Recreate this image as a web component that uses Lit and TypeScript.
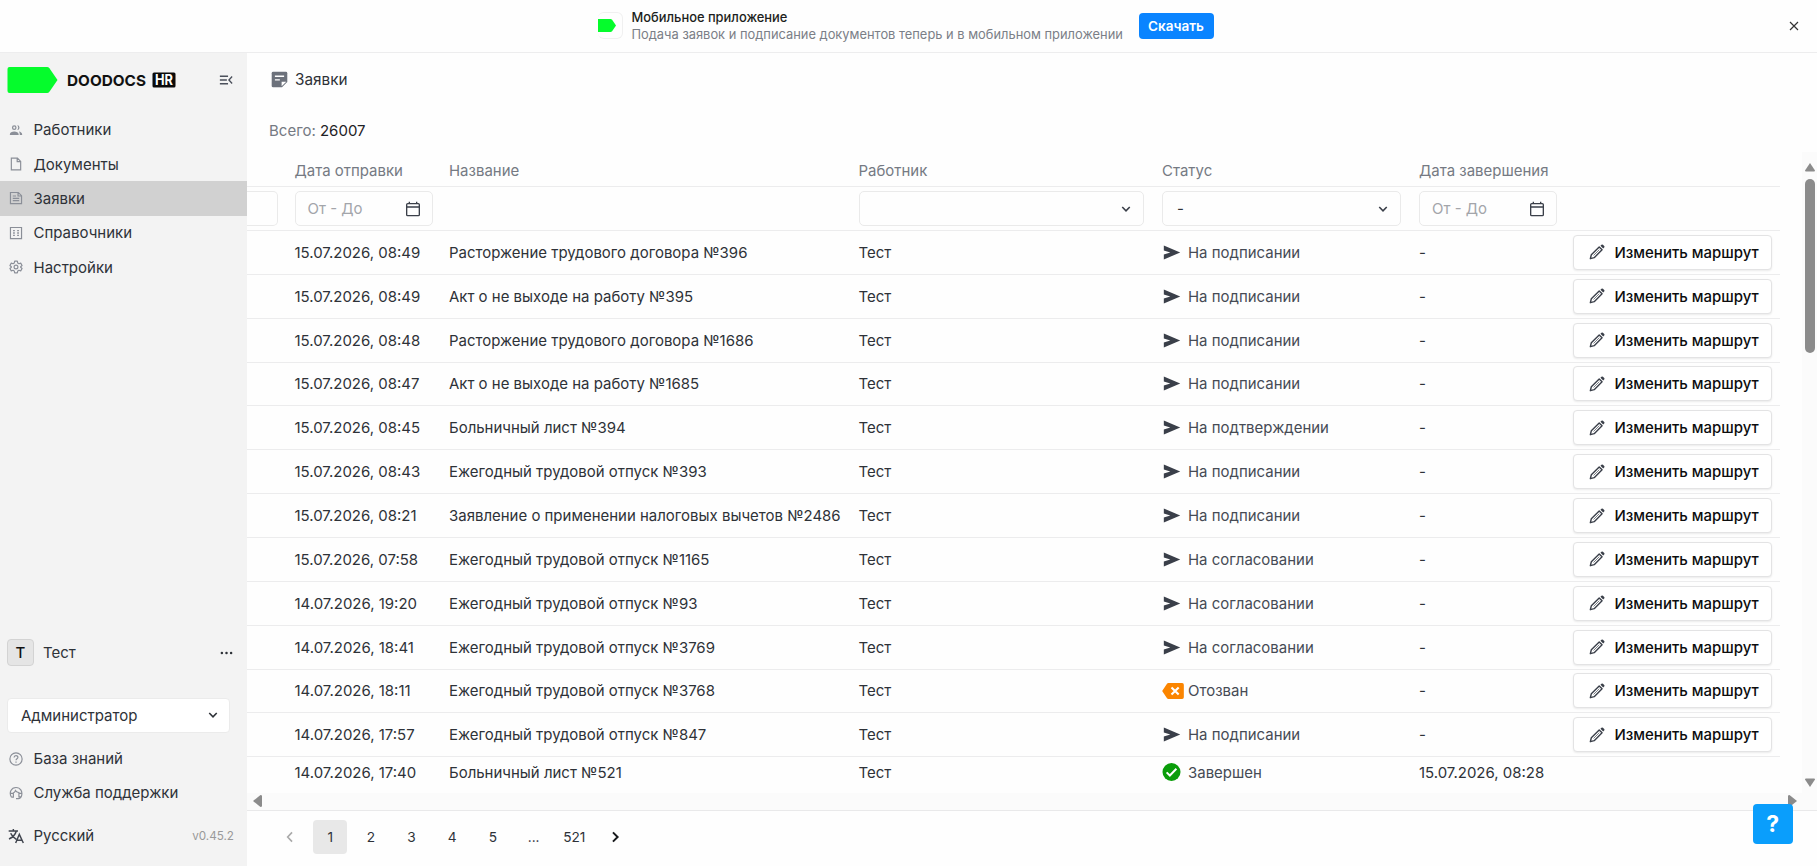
import { LitElement, html, css, svg, nothing } from "lit";
import { customElement } from "lit/decorators.js";

type Status = "sign" | "confirm" | "approve" | "revoked" | "done";
interface Row { date: string; name: string; status: Status; end: string; }

const LABELS: Record<Status, string> = {
  sign: "На подписании",
  confirm: "На подтверждении",
  approve: "На согласовании",
  revoked: "Отозван",
  done: "Завершен",
};

const ROWS: Row[] = [
  ["15.07.2026, 08:49", "Расторжение трудового договора №396", "sign"],
  ["15.07.2026, 08:49", "Акт о не выходе на работу №395", "sign"],
  ["15.07.2026, 08:48", "Расторжение трудового договора №1686", "sign"],
  ["15.07.2026, 08:47", "Акт о не выходе на работу №1685", "sign"],
  ["15.07.2026, 08:45", "Больничный лист №394", "confirm"],
  ["15.07.2026, 08:43", "Ежегодный трудовой отпуск №393", "sign"],
  ["15.07.2026, 08:21", "Заявление о применении налоговых вычетов №2486", "sign"],
  ["15.07.2026, 07:58", "Ежегодный трудовой отпуск №1165", "approve"],
  ["14.07.2026, 19:20", "Ежегодный трудовой отпуск №93", "approve"],
  ["14.07.2026, 18:41", "Ежегодный трудовой отпуск №3769", "approve"],
  ["14.07.2026, 18:11", "Ежегодный трудовой отпуск №3768", "revoked"],
  ["14.07.2026, 17:57", "Ежегодный трудовой отпуск №847", "sign"],
  ["14.07.2026, 17:40", "Больничный лист №521", "done", "15.07.2026, 08:28"],
].map(([date, name, status, end]) => ({ date, name, status: status as Status, end: end ?? "-" }));

const PATHS = {
  people: svg`<g fill="currentColor" stroke="none"><path d="M1.500 20.500v-1.300c0-3.200 3.800-4.700 7.500-4.700s7.500 1.500 7.500 4.700v1.300zM17 14.600c2.800.5 5.500 2 5.500 4.600v1.300h-4v-1.300c0-1.900-.5-3.300-1.500-4.600zM14 4a4 4 0 1 1 0 8 6 6 0 0 0 0-8z"/><path fill-rule="evenodd" d="M9 4a4 4 0 1 1 0 8 4 4 0 0 1 0-8zm0 2.200a1.800 1.800 0 1 0 0 3.600 1.800 1.800 0 0 0 0-3.600z"/></g>`,
  file: svg`<path d="M4 2h10.500l5.500 5.500V22H4zM14 2.300V8h5.700"/>`,
  note: svg`<path d="M2.500 2.500h13.500l5.500 5.500v13.500h-19zM15.500 2.800v5.700h5.700M6.500 8.500h5.500M6.500 12.500h11M6.500 16.500h11"/>`,
  list: svg`<path d="M2.500 2.500h19v19h-19z"/><path d="M7 7.800h3M14 7.800h3M7 12h3M14 12h3M7 16.200h3M14 16.200h3" stroke-width="2.200"/>`,
  gear: svg`<circle cx="12" cy="12" r="3.300"/><path d="M9.700 2h4.600l.7 3.200 2 1.200 3.100-1 2.300 4L20 11.500v1l2.400 2.100-2.300 4-3.100-1-2 1.200-.7 3.200H9.700L9 18.800l-2-1.200-3.100 1-2.300-4L4 12.500v-1L1.600 9.400l2.300-4 3.100 1 2-1.200z" stroke-linejoin="round"/>`,
  help: svg`<circle cx="12" cy="12" r="10.500"/><path d="M8.700 9.500c0-4.500 6.600-4.500 6.600-.3 0 2.300-3.300 2.500-3.300 5M12 16.300v2.200"/>`,
  support: svg`<path d="M4 19c-4.500-8 0-16.500 8-16.500s11.500 7.500 9.500 14.500c-.7 3-2.500 4.500-5.500 4.500h-4M4 19h3.500v-6.500H3M21 12.500h-4v6h4M7 12c2.500-.7 3.500-2 4-4 1.500 2 3.500 3 7 3.500"/>`,
  translate: svg`<path d="M1 4.500h14M8 1.500v3M12.500 4.500c-1.500 5.500-5.500 9.500-11 12M4 8c1.500 4 4.500 6.500 8.500 9M11.500 22.500 17 9.500l6 13M13.500 18.300h7.500" stroke-width="2.200"/>`,
  collapse: svg`<path d="M1.500 5.500h14M1.500 12h12M1.500 18.500h14M22.500 6 17 12l5.500 6" stroke-width="2.300"/>`,
  down: svg`<path d="m4.500 8 7.500 7.500L19.500 8" stroke-width="3.200"/>`,
  left: svg`<path d="M15.500 4 8 12l7.500 8" stroke-width="2.800"/>`,
  right: svg`<path d="M8.500 4 16.500 12l-8 8" stroke-width="3.400"/>`,
  close: svg`<path d="m4 4 16 16M20 4 4 20" stroke-width="2.300"/>`,
  dots: svg`<g fill="currentColor" stroke="none"><circle cx="3.500" cy="12" r="2.300"/><circle cx="12" cy="12" r="2.300"/><circle cx="20.500" cy="12" r="2.300"/></g>`,
  calendar: svg`<path d="M4 4h16a1.500 1.500 0 0 1 1.500 1.500v15A1.500 1.500 0 0 1 20 22H4a1.500 1.500 0 0 1-1.500-1.500v-15A1.500 1.500 0 0 1 4 4zM3 9h18M6.500 1v3M17.500 1v3" stroke-width="2"/>`,
  pencil: svg`<path d="m2 22 1.500-5.800L15.300 4.400l4.300 4.300L7.800 20.500z" stroke-width="2.100" stroke-linejoin="round"/><path d="m6.800 17.200 8.700-8.700" stroke-width="1"/><path d="m17.200 2.700 1.500-1.500a1.600 1.600 0 0 1 2.200 0l1.900 1.900a1.600 1.600 0 0 1 0 2.200l-1.500 1.500z" fill="currentColor" stroke="none"/>`,
  send: svg`<path d="M2.300 3.300 23 12 2.300 20.700v-6.300L10.500 12 2.300 9.600z" fill="currentColor" stroke="none"/>`,
  revoked: svg`<path d="M8.500 2.500H25a2 2 0 0 1 2 2v15a2 2 0 0 1-2 2H8.500a2 2 0 0 1-1.700-.9L1 12l5.800-8.600a2 2 0 0 1 1.700-.9z" fill="#fb8500" stroke="none"/><path d="m12.200 7.700 8.600 8.600M20.800 7.700l-8.600 8.600" stroke="#fff" stroke-width="2.500"/>`,
  done: svg`<circle cx="12" cy="12" r="12" fill="#0a9d0a" stroke="none"/><path d="m5.500 12.500 4.300 4.200 8.700-9" stroke="#fff" stroke-width="2.600"/>`,
  title: svg`<path d="M3 1h18a2 2 0 0 1 2 2v12.500L15.500 23H3a2 2 0 0 1-2-2V3a2 2 0 0 1 2-2z" fill="currentColor" stroke="none"/><path d="M5.500 7.500h13M5.500 12.500h7" stroke="#fff" stroke-width="2"/><path d="M15 21.500V15h6.500z" fill="#fff" stroke="none"/>`,
};
const icon = (name: keyof typeof PATHS, cls = "", box = "0 0 24 24") =>
  html`<svg class="icon ${cls}" viewBox=${box} fill="none" stroke="currentColor" stroke-width="2">${PATHS[name]}</svg>`;

const base = css`
  * { box-sizing: border-box; }
  .icon { width: 14px; height: 14px; flex: none; display: block; }
`;

@customElement("app-banner")
class AppBanner extends LitElement {
  static styles = [base, css`
    :host { display: flex; height: 52.500px; align-items: center; border-bottom: 1px solid #ededee; background: #fefefe; flex: none; padding: 0 17px 0 598px; }
    .app { width: 25px; height: 27px; border: 1px solid #f0f0f0; border-left: 0; border-radius: 6px; display: flex; align-items: center; flex: none; }
    .app svg { width: 18px; height: 13px; display: block; }
    .text { margin-left: 8.500px; width: 507px; white-space: nowrap; }
    .head { font-size: 12.900px; line-height: 17px; color: #1d1e20; font-weight: 500; }
    .sub { font-size: 12.880px; line-height: 17px; color: #7b7f87; }
    .get { height: 26px; width: 75px; border: 0; border-radius: 4px; background: #0a84ff; color: #fff; font: 600 13.500px Inter, sans-serif; padding: 0; }
    .close { margin-left: auto; width: 12px; height: 12px; color: #333; }
  `];
  render() {
    return html`
      <div class="app"><svg viewBox="0 0 18 13"><path d="M0 0h12.500q1 0 1.600.8L18 6.500l-3.900 5.700q-.6.800-1.600.8H0z" fill="#05fc2c"/></svg></div>
      <div class="text"><div class="head">Мобильное приложение</div><div class="sub">Подача заявок и подписание документов теперь и в мобильном приложении</div></div>
      <button class="get">Скачать</button>
      ${icon("close", "close")}`;
  }
}

@customElement("app-sidebar")
class AppSidebar extends LitElement {
  static styles = [base, css`
    :host { display: flex; flex-direction: column; width: 247px; flex: none; background: #f3f3f3; color: #2e3238; font-size: 15px; }
    .top { height: 60px; padding: 0 14px 6px 7px; display: flex; align-items: center; flex: none; }
    .mark { width: 51px; height: 26px; flex: none; }
    .word { margin-left: 9px; width: 80px; height: 18px; }
    .hr { margin-left: 5px; width: 24px; height: 16px; }
    .fold { margin-left: auto; color: #4b505b; }
    .item { height: 34.400px; display: flex; align-items: center; padding-left: 8.500px; gap: 11px; flex: none; white-space: nowrap; }
    .item .icon { color: #8b8f98; }
    .active { background: #d1d1d1; }
    .fill { flex: 1; }
    .user { display: flex; align-items: center; padding: 0 14px 0 7px; height: 28px; flex: none; margin-bottom: 31px; }
    .avatar { width: 27px; height: 27px; border: 1px solid #d3d3d3; border-radius: 4px; background: #e5e5e5; display: grid; place-items: center; color: #111; font-weight: 500; margin-right: 9px; }
    .dots { margin-left: auto; width: 13px; }
    .select { margin: 0 17px 8.500px 7px; height: 35px; border: 1px solid #ebebeb; border-radius: 4px; background: #fff; display: flex; align-items: center; justify-content: space-between; padding: 0 10px 0 13px; flex: none; }
    .select .icon { width: 12px; height: 12px; }
    .lang { margin: 8.500px 0 13px; }
    .lang .icon { color: #41464f; width: 16px; height: 16px; margin: 0 -1px; }
    .version { margin-left: auto; margin-right: 13px; font-size: 11.700px; color: #999; }
  `];
  render() {
    const nav = [["people", "Работники"], ["file", "Документы"], ["note", "Заявки"], ["list", "Справочники"], ["gear", "Настройки"]] as const;
    return html`
      <div class="top">
        <svg class="mark" viewBox="0 0 51 26"><path d="M2.500 0H40q1.500 0 2.400 1.200L50.500 13l-8.100 11.800Q41.500 26 40 26H2.500Q.5 26 .5 24V2Q.5 0 2.500 0z" fill="#05fc2c"/></svg>
        <svg class="word" viewBox="0 0 80 18"><text x="0" y="14.500" textLength="79" lengthAdjust="spacingAndGlyphs" font-size="15" font-weight="700" fill="#111">DOODOCS</text></svg>
        <svg class="hr" viewBox="0 0 24 16"><rect x=".5" y=".5" width="23" height="15" rx="1.500" fill="#0b0b0b"/><text x="3" y="13" textLength="18" lengthAdjust="spacingAndGlyphs" font-size="14" font-weight="700" fill="#fff">HR</text></svg>
        ${icon("collapse", "fold")}
      </div>
      ${nav.map(([i, t]) => html`<div class="item ${i === "note" ? "active" : ""}">${icon(i)}<span>${t}</span></div>`)}
      <div class="fill"></div>
      <div class="user"><div class="avatar">T</div>Тест${icon("dots", "dots")}</div>
      <div class="select">Администратор${icon("down")}</div>
      <div class="item">${icon("help")}<span>База знаний</span></div>
      <div class="item">${icon("support")}<span>Служба поддержки</span></div>
      <div class="item lang">${icon("translate")}<span>Русский</span><span class="version">v0.45.2</span></div>`;
  }
}

@customElement("requests-table")
class RequestsTable extends LitElement {
  static styles = [base, css`
    :host { display: block; width: 1533px; height: 641px; overflow: hidden; font-size: 14.970px; color: #2e3238; }
    .row { display: grid; grid-template-columns: 38.500px 154.500px 409.500px 303.500px 257px 154px 216px; height: 43.860px; border-bottom: 1px solid #ececed; align-items: center; white-space: nowrap; }
    .row > * { padding: 0 9px; }
    .header { height: 35.600px; color: #757a83; padding-top: 3px; }
    .short { height: 30px; border: 0; }
    .row > .range { padding-right: 7.500px; }
    .field { height: 35px; border: 1px solid #eaeaea; border-radius: 5px; display: flex; align-items: center; justify-content: space-between; padding: 0 11px 0 12px; color: #a3a5aa; background: #fefefe; }
    .cut { border-left: 0; border-radius: 0 5px 5px 0; margin-left: -9px; }
    .field .icon { color: #3a3f49; width: 16px; height: 16px; }
    .pick { color: #2e3238; padding-left: 14px; padding-right: 11px; }
    .pick .icon { width: 12px; height: 12px; }
    .state { display: flex; align-items: center; color: #464b55; gap: 7px; }
    .state .icon { color: #3a3f49; width: 19px; height: 19px; }
    .state .revoked { width: 24px; height: 20px; margin: 0 -4px 0 -1px; }
    .state .done { height: 18px; }
    .route { width: 199px; height: 35px; border: 1px solid #e3e3e4; border-radius: 4px; background: #fff; box-shadow: 0 1px 2px rgba(0,0,0,.08); display: flex; align-items: center; padding: 0 0 0 15px; gap: 9.500px; font: 500 14.970px Inter, sans-serif; color: #0c0d0e; }
    .route .icon { width: 16px; height: 16px; color: #3a3f49; }
  `];
  state(s: Status) {
    if (s === "revoked") return icon("revoked", "revoked", "0 0 28 24");
    return s === "done" ? icon("done", "done") : icon("send");
  }
  render() {
    const range = html`<div class="range"><div class="field"><span>От - До</span>${icon("calendar")}</div></div>`;
    return html`
      <div class="row header"><span></span><span>Дата отправки</span><span>Название</span><span>Работник</span><span>Статус</span><span>Дата завершения</span></div>
      <div class="row">
        <div class="range"><div class="field cut"></div></div>${range}<span></span>
        <div><div class="field pick"><span></span>${icon("down")}</div></div>
        <div><div class="field pick"><span>-</span>${icon("down")}</div></div>${range}
      </div>
      ${ROWS.map((r) => html`<div class="row ${r.status === "done" ? "short" : ""}">
        <span></span><span>${r.date}</span><span>${r.name}</span><span>Тест</span>
        <span class="state">${this.state(r.status)}<span>${LABELS[r.status]}</span></span><span>${r.end}</span>
        ${r.status === "done" ? nothing : html`<span><button class="route">${icon("pencil")}Изменить маршрут</button></span>`}
      </div>`)}`;
  }
}

@customElement("app-root")
class AppRoot extends LitElement {
  static styles = [base, css`
    :host { display: flex; flex-direction: column; width: 100%; height: 100vh; overflow: hidden; background: #fefefe; font-family: Inter, "Noto Sans", sans-serif; color: #2e3238; }
    .body { display: flex; flex: 1; min-height: 0; }
    main { flex: 1; min-width: 0; display: flex; flex-direction: column; }
    .title { height: 53px; display: flex; align-items: center; padding-left: 24px; gap: 7px; font-size: 15.300px; flex: none; }
    .title .icon { width: 17px; height: 17px; color: #6c717b; }
    .total { height: 46px; padding: 15px 0 0 22px; font-size: 15px; line-height: 19px; color: #757a83; flex: none; }
    .total b { font-weight: 400; color: #1f2226; }
    .scroll { display: flex; height: 641px; flex: none; justify-content: space-between; }
    .vbar { width: 15px; background: #fbfbfb; padding: 11px 2px 6px 3px; display: flex; flex-direction: column; align-items: center; }
    .thumb { width: 10px; height: 174px; border-radius: 5px; background: #8b8b8b; margin-top: 7px; }
    .arrow { width: 10px; height: 9px; fill: #8b8b8b; flex: none; display: block; }
    .last { margin-top: auto; }
    .hbar { height: 18px; display: flex; align-items: center; justify-content: space-between; padding: 0 20px 0 6px; background: #fbfbfb; border-bottom: 1px solid #e9e9ea; flex: none; }
    .side { width: 9px; height: 12px; }
    .pages { display: flex; align-items: center; height: 52px; padding-left: 25.500px; gap: 6.700px; font-size: 13.700px; }
    .page { width: 34px; height: 34px; border-radius: 4px; display: grid; place-items: center; }
    .current { background: #e8e8e8; }
    .prev { color: #aaa; }
    .next { color: #16181b; }
    .ask { position: absolute; right: 24.500px; bottom: 22.500px; width: 39.500px; height: 39.500px; border: 0; border-radius: 4px; background: #0a9efc; display: grid; place-items: center; padding: 0; color: #fff; font: 700 23px Inter, sans-serif; }
  `];
  render() {
    return html`
      <app-banner></app-banner>
      <div class="body">
        <app-sidebar></app-sidebar>
        <main>
          <div class="title">${icon("title")}Заявки</div>
          <div class="total">Всего: <b>26007</b></div>
          <div class="scroll">
            <requests-table></requests-table>
            <div class="vbar">
              <svg class="arrow" viewBox="0 0 10 9"><path d="M5 0l5 7.500q0 1-1 1H1q-1 0-1-1z"/></svg>
              <div class="thumb"></div>
              <svg class="arrow last" viewBox="0 0 10 9"><path d="M5 9l5-7.500q0-1-1-1H1q-1 0-1 1z"/></svg>
            </div>
          </div>
          <div class="hbar">
            <svg class="arrow side" viewBox="0 0 9 12"><path d="M0 6l7.500-6q1.500 0 1.500 1v10q0 1-1.500 1z"/></svg>
            <svg class="arrow side" viewBox="0 0 9 12"><path d="M9 6L1.500 0Q0 0 0 1v10q0 1 1.500 1z"/></svg>
          </div>
          <div class="pages">
            <span class="page prev">${icon("left")}</span>
            ${["1", "2", "3", "4", "5", "...", "521"].map((p) => html`<span class="page ${p === "1" ? "current" : ""}">${p}</span>`)}
            <span class="page next">${icon("right")}</span>
          </div>
        </main>
      </div>
      <button class="ask">?</button>`;
  }
}
